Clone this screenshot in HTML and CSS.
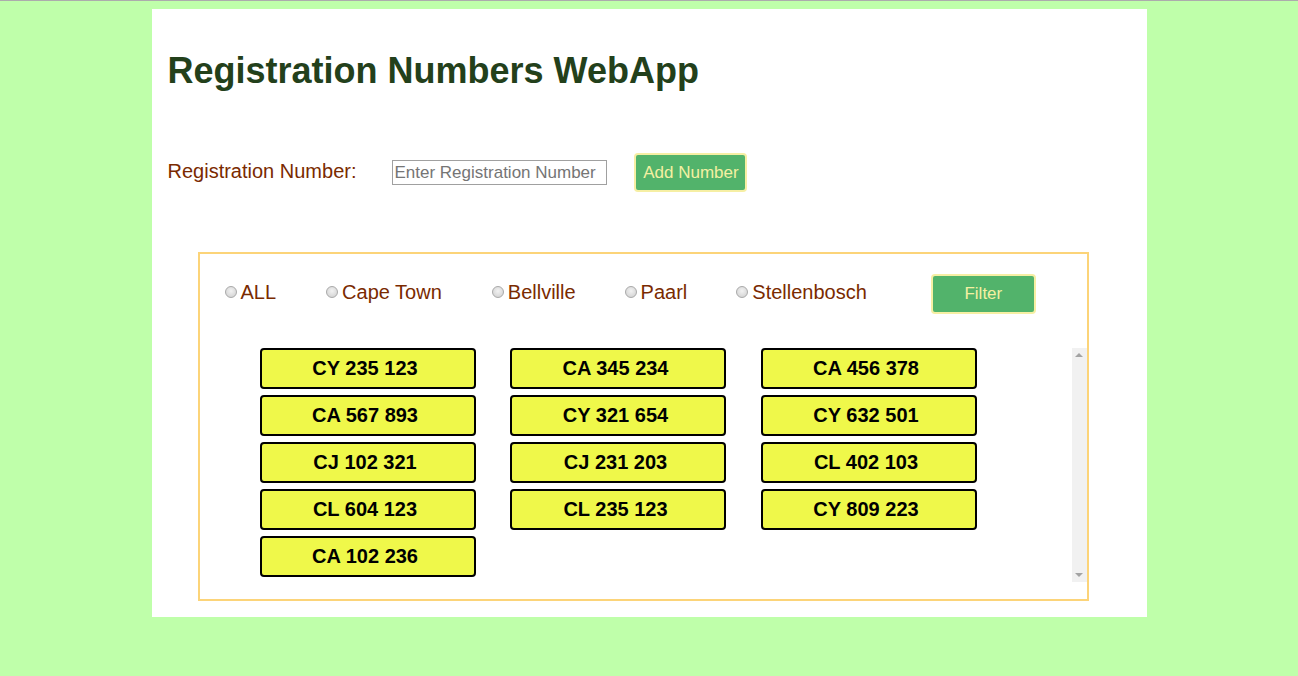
FILE: index.html
```html
<!DOCTYPE html>
<html>
<head>
<meta charset="utf-8">
<title>Registration Numbers WebApp</title>
<link rel="stylesheet" href="styles.css">
</head>
<body>
<div class="app">
  <h1 class="title">Registration Numbers WebApp</h1>
  <div class="add-row">
    <label class="reg-label" for="reg">Registration Number:</label>
    <input class="reg-input" id="reg" type="text" placeholder="Enter Registration Number">
    <button class="btn btn-add">Add Number</button>
  </div>
  <div class="filter-box">
    <div class="radio-row">
      <label class="radio"><input type="radio" name="town"><span>ALL</span></label>
      <label class="radio"><input type="radio" name="town"><span>Cape Town</span></label>
      <label class="radio"><input type="radio" name="town"><span>Bellville</span></label>
      <label class="radio"><input type="radio" name="town"><span>Paarl</span></label>
      <label class="radio"><input type="radio" name="town"><span>Stellenbosch</span></label>
      <button class="btn btn-filter">Filter</button>
    </div>
    <div class="plates-scroll">
      <div class="plates">
        <div class="plate">CY 235 123</div>
        <div class="plate">CA 345 234</div>
        <div class="plate">CA 456 378</div>
        <div class="plate">CA 567 893</div>
        <div class="plate">CY 321 654</div>
        <div class="plate">CY 632 501</div>
        <div class="plate">CJ 102 321</div>
        <div class="plate">CJ 231 203</div>
        <div class="plate">CL 402 103</div>
        <div class="plate">CL 604 123</div>
        <div class="plate">CL 235 123</div>
        <div class="plate">CY 809 223</div>
        <div class="plate">CA 102 236</div>
      </div>
      <div class="scrollbar">
        <span class="arrow arrow-up"></span>
        <span class="arrow arrow-down"></span>
      </div>
    </div>
  </div>
</div>
</body>
</html>
```
FILE: styles.css
```css
html {
  border-top: 1px solid #acacac;
  background: #bfffaa;
}
body {
  margin: 8px 0 0 0;
  font-family: "Liberation Sans", Arial, sans-serif;
}
.app {
  width: 995px;
  height: 608px;
  margin: 0 auto;
  background: #ffffff;
  box-sizing: border-box;
  padding: 42px 58px 0 16px;
}
.title {
  margin: 0;
  font-size: 36px;
  font-weight: bold;
  color: #23401b;
  line-height: 40px;
}
.add-row {
  display: flex;
  align-items: center;
  margin-top: 62px;
  height: 39px;
}
.reg-label {
  font-size: 20px;
  color: #7a2a00;
  margin-right: 36px;
  position: relative;
  top: -1px;
}
.reg-input {
  width: 215px;
  height: 25px;
  box-sizing: border-box;
  border: 1px solid #a0a0a0;
  font-family: "Liberation Sans", Arial, sans-serif;
  font-size: 17px;
  padding: 0 1px;
  margin: 0 27px 0 0;
}
.reg-input::placeholder {
  color: #757575;
}
.btn {
  background: #52b36b;
  border: 2px solid #f6efa4;
  border-radius: 4px;
  color: #f4f0a2;
  font-family: "Liberation Sans", Arial, sans-serif;
  font-size: 17px;
  box-sizing: border-box;
  padding: 0;
}
.btn-add {
  width: 113px;
  height: 39px;
}
.filter-box {
  margin: 60px 0 0 30px;
  border: 2px solid #fcd479;
  height: 349px;
  box-sizing: border-box;
  padding: 20px 0 17px 0;
}
.radio-row {
  display: flex;
  align-items: center;
  height: 40px;
  padding-left: 25px;
}
.radio {
  display: flex;
  align-items: center;
  font-size: 20px;
  color: #7a2a00;
  margin-right: 50px;
  position: relative;
  top: -2px;
}
.radio input {
  appearance: none;
  -webkit-appearance: none;
  width: 12px;
  height: 12px;
  margin: 0 4px 0 0;
  border-radius: 50%;
  border: 1px solid #a9a9a9;
  background: radial-gradient(circle at 50% 40%, #f2f2f2 0%, #dcdcdc 60%, #cfcfcf 100%);
  box-sizing: border-box;
}
.radio:nth-child(4) { margin-right: 49px; }
.radio:nth-child(3) { margin-right: 49px; }
.radio:nth-child(5) { margin-right: 64px; }
.btn-filter {
  width: 105px;
  height: 40px;
}
.plates-scroll {
  margin-top: 34px;
  height: 234px;
  display: flex;
  padding-left: 60px;
}
.plates {
  flex: 1;
  display: grid;
  grid-template-columns: 216px 216px 216px;
  grid-auto-rows: 41px;
  column-gap: 34.5px;
  row-gap: 6px;
  align-content: start;
}
.plate {
  height: 41px;
  box-sizing: border-box;
  border: 2px solid #000000;
  border-radius: 4px;
  background: #eff84a;
  color: #000000;
  font-weight: bold;
  font-size: 20px;
  display: flex;
  align-items: center;
  justify-content: center;
  padding-right: 5px;
}
.scrollbar {
  width: 15px;
  background: #f1f1f1;
  display: flex;
  flex-direction: column;
  justify-content: space-between;
  align-items: center;
  padding: 5px 0 5px 0;
  box-sizing: border-box;
}
.arrow {
  width: 0;
  height: 0;
  border-left: 4px solid transparent;
  border-right: 4px solid transparent;
}
.arrow-up {
  border-bottom: 4px solid #a3a3a3;
}
.arrow-down {
  border-top: 4px solid #a3a3a3;
}
```
